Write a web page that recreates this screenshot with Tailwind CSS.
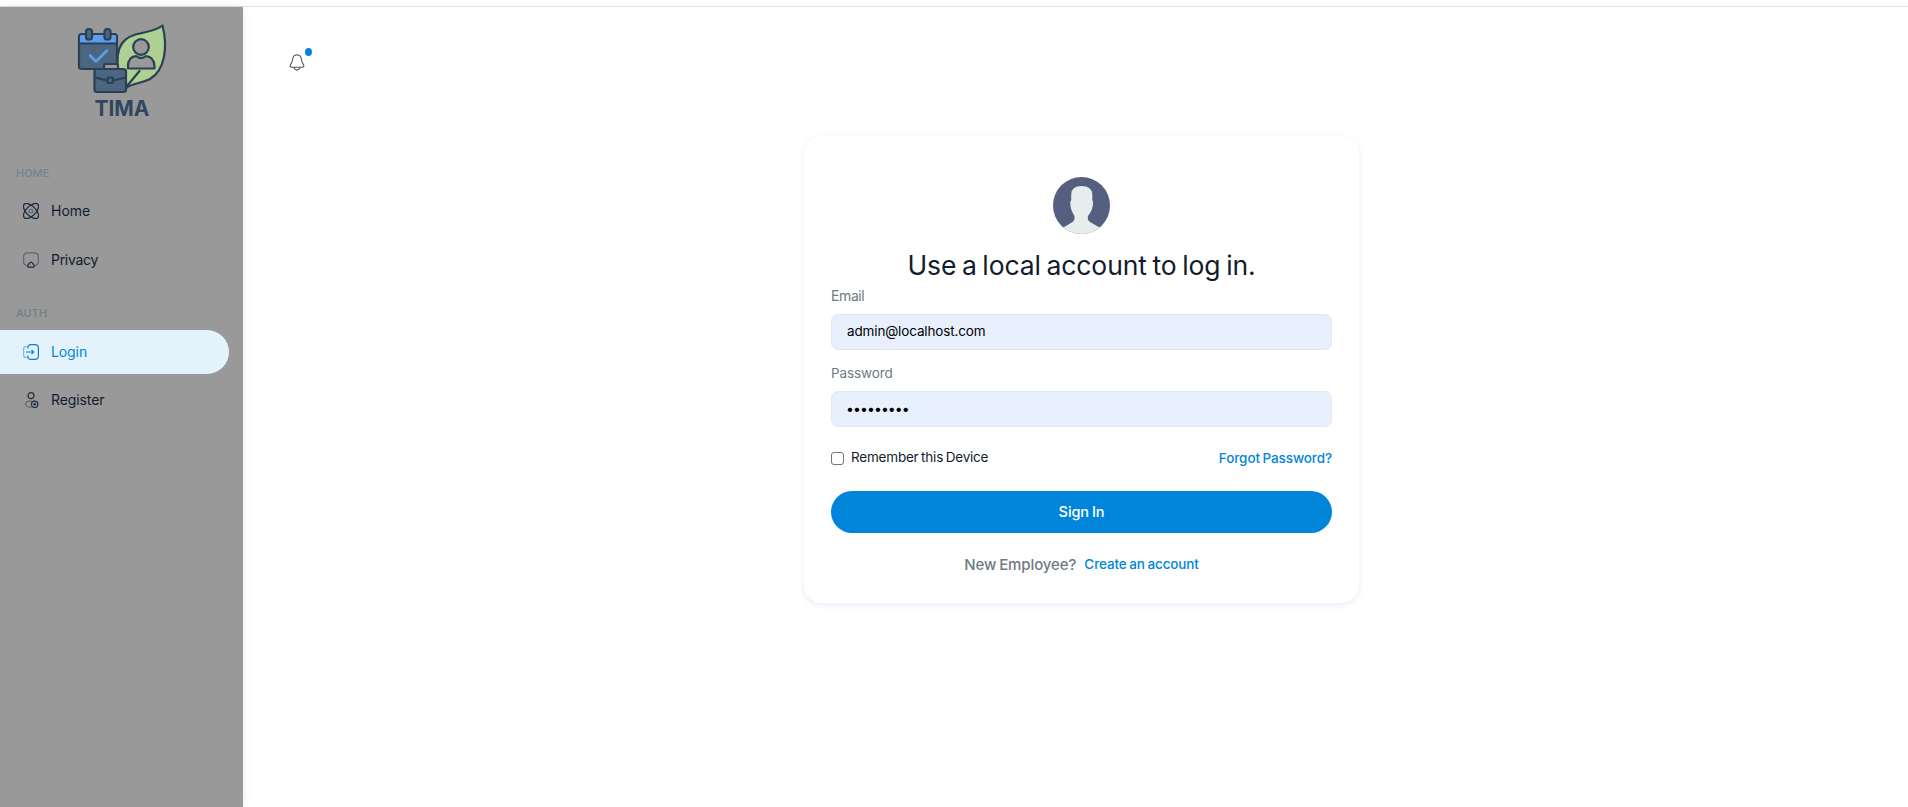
<!DOCTYPE html>
<html lang="en">
<head>
<meta charset="utf-8">
<title>Login - TIMA</title>
<script src="https://cdn.jsdelivr.net/npm/@tailwindcss/browser@4"></script>
</head>
<body class="h-[807px] overflow-hidden bg-white font-['Inter',sans-serif] text-[14px] text-[#111c2d]">
<div class="h-[7px] border-b border-[#e0e0e0] bg-white"></div>
<div class="flex h-[800px]">
  <aside class="flex w-[243px] shrink-0 flex-col bg-[#999999] shadow-[0_0_8px_rgba(37,83,185,0.12)]">
    <div class="h-[123px] pl-[60px]">
      <svg class="h-[123px] w-[130px]" viewBox="0 7 130 123" fill="none" stroke="#2a4056" stroke-width="2.200" stroke-linejoin="round" stroke-linecap="round">
        <path d="M58 70C55 45 64 36 82 33C92 31 98 29 102.500 25.500C108 47 105 70 90 79C80 84 73 83 66 88Z" fill="#aed093"/>
        <path d="M79.500 71L67 86"/>
        <circle cx="81" cy="47" r="7.800" fill="#999999"/>
        <path d="M68 68.500V66Q68 57 76 56Q81 60 86 56Q94 57 94.500 66V68.500Z" fill="#999999"/>
        <rect x="19" y="34" width="38" height="35" rx="2.500" fill="#4d6680"/>
        <path d="M20 43V36.500Q20 35 21.500 35H54.500Q56 35 56 36.500V43Z" fill="#5b9fea" stroke="none"/>
        <path d="M19 43.500H57"/>
        <rect x="26" y="29" width="6" height="10.500" rx="2.800" fill="#4d6680"/>
        <rect x="44.500" y="29" width="6" height="10.500" rx="2.800" fill="#4d6680"/>
        <path d="M30 55.500L36 61.500L47 50.500" stroke="#5b9fea" stroke-width="2.600"/>
        <path d="M44 69V65.500Q44 64 46 64H56Q58 64 58 66V69" fill="#999999"/>
        <rect x="34.500" y="69" width="31.500" height="23" rx="2.500" fill="#4d6680"/>
        <path d="M35 77.500L47.500 80.500M53 80.500L66 77.500"/>
        <rect x="47.500" y="77.500" width="5.500" height="5.500" rx="1" fill="#4d6680"/>
        <text x="34.500" y="116" textLength="55" lengthAdjust="spacingAndGlyphs" fill="#2f475e" stroke="none" font-family="Inter" font-weight="700" font-size="22">TIMA</text>
      </svg>
    </div>
    <nav class="flex flex-col pt-[33px]">
      <div class="h-[20px] pl-[16px] text-[11px] font-medium leading-[20px] text-[#75838d]">HOME</div>
      <a class="mt-[6px] flex h-[44px] items-center gap-[12px] pl-[23px]">
        <svg class="size-4" viewBox="0 0 16 16" fill="none" stroke="#1c2b41" stroke-width="1.300"><ellipse cx="8" cy="8" rx="9.500" ry="4.800" transform="rotate(45 8 8)"/><ellipse cx="8" cy="8" rx="9.500" ry="4.800" transform="rotate(-45 8 8)"/><rect x="6.300" y="6.300" width="3.400" height="3.400" rx="1" stroke="#5d6674"/></svg>
        <span class="pb-[1px]">Home</span>
      </a>
      <a class="mt-[5px] flex h-[44px] items-center gap-[12px] pl-[23px]">
        <svg class="size-4" viewBox="0 0 16 16" fill="none" stroke="#1c2b41" stroke-width="1.200"><path d="M3.500 13.300Q.6 12.800.6 9.500V5Q.6.900 4.700.900H11.300Q15.400.900 15.400 5V9.500Q15.400 12.800 12.500 13.300" stroke="#5d6674"/><path d="M4.700 14.600Q4.200 14 5 13L7 10.700Q8 9.600 9 10.700L11 13Q11.800 14 11.300 14.600Q10.900 15.200 8 15.200T4.700 14.600Z"/></svg>
        <span class="pb-[1px] tracking-[-0.3px]">Privacy</span>
      </a>
      <div class="mt-[21px] h-[20px] pl-[16px] text-[11px] font-medium leading-[20px] text-[#747e85]">AUTH</div>
      <a class="mt-[7px] flex h-[44px] w-[229px] items-center gap-[12px] rounded-r-full bg-[#e4f3fb] pl-[23px] text-[#0085db]">
        <svg class="size-4" viewBox="0 0 16 16" fill="none" stroke="#0085db" stroke-width="1.200"><path d="M4.800 4.500V3Q5.200.600 8 .600H12Q15.400.600 15.400 4V12Q15.400 15.400 12 15.400H8Q5.200 15.400 4.800 13V11.500"/><path d="M4.500 2.500H3Q.6 2.500.6 5V11Q.6 13.500 3 13.500H4.500" stroke="#6dbaea"/><path d="M3 8H10.500M8.500 5.800L10.700 8L8.500 10.200"/></svg>
        <span class="pb-[1px] tracking-[-0.1px]">Login</span>
      </a>
      <a class="mt-[4px] flex h-[44px] items-center gap-[12px] pl-[23px]">
        <svg class="size-4" viewBox="0 0 16 16" fill="none" stroke="#1c2b41" stroke-width="1.200"><circle cx="8" cy="3.700" r="3"/><path d="M9 9.300Q2.700 8.500 2.700 12T9 15" stroke="#5d6674"/><circle cx="11.700" cy="12.300" r="3.200"/><path d="M11.700 10.800V13.800M10.200 12.300H13.200"/></svg>
        <span class="pb-[1px] tracking-[-0.1px]">Register</span>
      </a>
    </nav>
  </aside>
  <main class="relative flex-1 pl-[561px] pt-[129px]">
    <div class="absolute left-[46px] top-[41px]">
      <svg class="h-[24px] w-[28px]" viewBox="0 0 28 24" fill="none" stroke="#555" stroke-width="1.100"><path d="M8 6.700Q3.800 7 3.500 12Q3.200 14.500 1.300 17Q.5 19.200 3 19.200H13Q15.500 19.200 14.700 17Q12.800 14.500 12.500 12Q12.200 7 8 6.700Z"/><path d="M4.500 19.200Q8 25 11.500 19.200"/><ellipse cx="19.500" cy="4" rx="3.500" ry="4" fill="#0085db" stroke="none"/></svg>
    </div>
    <section class="h-[467px] w-[555px] rounded-[18px] bg-white px-[27px] pt-[41px] shadow-[0_2px_6px_rgba(37,83,185,0.1)]">
      <svg class="mx-auto size-[57px]" viewBox="0 0 57 57"><defs><clipPath id="avatar"><circle cx="28.500" cy="28.500" r="28.500"/></clipPath></defs><g clip-path="url(#avatar)"><path d="M0 0H57V57H0Z" fill="#556080"/><path d="M10 50.800L19.500 45Q22 43 21.500 39Q17.500 33 17.300 27Q17 24 18.200 23V17Q19 9 28.500 9Q38.500 9 39.300 17V23Q40.300 24 40 27Q39.700 33 35 39Q34 43 37 45L47 50.800V57H10Z" fill="#e7eced"/></g></svg>
      <h1 class="mt-[13px] h-[36px] text-center text-[26.5px] leading-[36px] tracking-[-0.1px] [word-spacing:-1.700px]">Use a local account to log in.</h1>
      <label class="mt-px block h-[24px] leading-[24px] tracking-[-0.4px] text-[#707a82]">Email</label>
      <div class="mt-[6px] flex h-[36px] items-center rounded-[7px] border border-[#e1e8f2] bg-[#e8f0fe] px-[15px] pb-[2px] text-[13.5px] tracking-[-0.14px] text-black">admin@localhost.com</div>
      <label class="mt-[11px] block h-[24px] text-[13.500px] leading-[24px] tracking-[-0.1px] text-[#707a82]">Password</label>
      <div class="mt-[6px] flex h-[36px] items-center rounded-[7px] border border-[#e1e8f2] bg-[#e8f0fe] px-[14px] pb-[2px] tracking-[-0.9px] text-black">•••••••••</div>
      <div class="mt-[19px] flex h-[24px] items-center"><span class="size-[13px] rounded-[3px] border border-[#6c757d]"></span><span class="ml-[7px] pb-[2px] text-[13.5px] tracking-[-0.2px] [word-spacing:-1px]">Remember this Device</span><a class="ml-auto text-[13.5px] font-medium tracking-[-0.1px] text-[#0085db] [word-spacing:-0.9px]">Forgot Password?</a></div>
      <button class="mt-[21px] flex h-[42px] w-full items-center justify-center rounded-full bg-[#0085db] text-[14.5px] font-medium tracking-[-0.1px] text-white [word-spacing:-0.8px]">Sign In</button>
      <div class="mt-[20px] flex h-[24px] items-center justify-center gap-[8px]"><span class="text-[15px] font-medium tracking-[-0.1px] text-[#707a82] [word-spacing:-1px]">New Employee?</span><span class="pb-[2px] text-[13.5px] font-medium tracking-[-0.13px] text-[#0085db] [word-spacing:-0.8px]">Create an account</span></div>
    </section>
  </main>
</div>
</body>
</html>
